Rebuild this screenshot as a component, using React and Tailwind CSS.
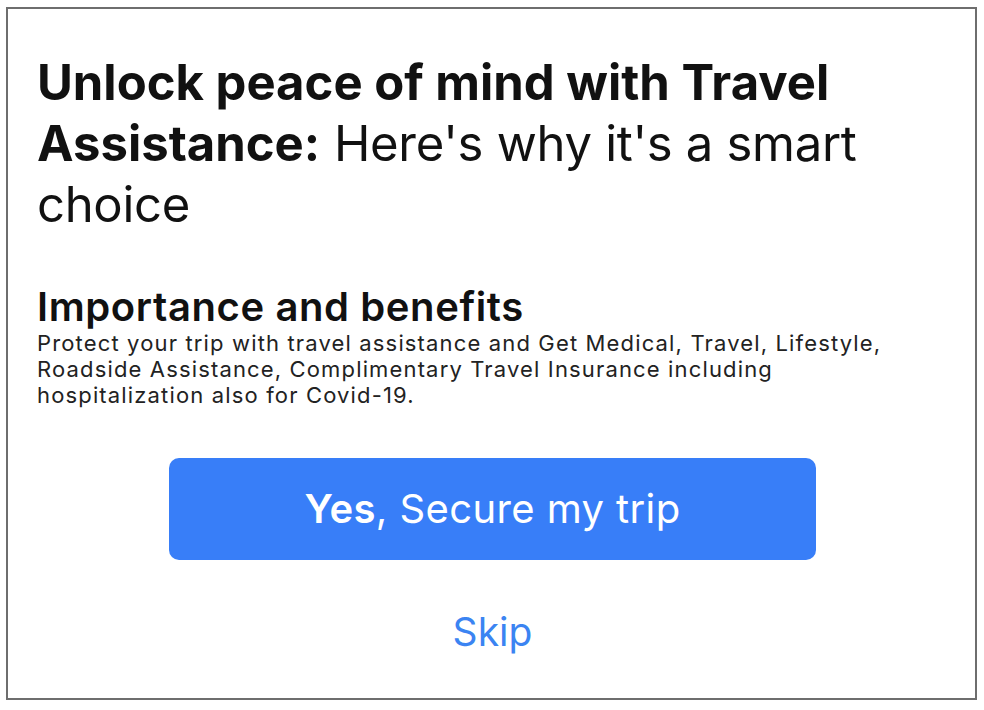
export default function App() {
  return (
    <div className="w-[984px] h-[710px] bg-white pt-[7px] pl-[6px]" style={{ fontFamily: 'Inter, "Noto Sans", sans-serif' }}>
      <div className="w-[971px] h-[693px] border-2 border-[#6e6e6e] bg-white px-[29px] pt-[43px]">
        <h1 className="text-[49px] leading-[61px] text-[#111]">
          <span className="font-bold">Unlock peace of mind with Travel Assistance:</span>{' '}
          <span className="font-normal tracking-[-0.3px]">Here's why it's a smart choice</span>
        </h1>

        <h2 className="mt-[49px] text-[40px] leading-[46px] font-semibold tracking-[0.6px] text-[#111]">Importance and benefits</h2>
        <p className="text-[22px] leading-[26px] tracking-[1.15px] text-[#222] pr-[40px]">
          Protect your trip with travel assistance and Get Medical, Travel, Lifestyle, Roadside Assistance, Complimentary Travel Insurance including hospitalization also for Covid-19.
        </p>

        <div className="flex flex-col items-center">
          <button className="mt-[50px] w-[647px] h-[102px] rounded-[10px] bg-[#387ef8] text-white text-[40px] tracking-[0.4px] ml-[2px]">
            <span className="font-semibold">Yes</span>, Secure my trip
          </button>
          <button className="mt-[48px] text-[39px] leading-[47px] text-[#3b84f2] ml-[2px]">Skip</button>
        </div>
      </div>
    </div>
  )
}
